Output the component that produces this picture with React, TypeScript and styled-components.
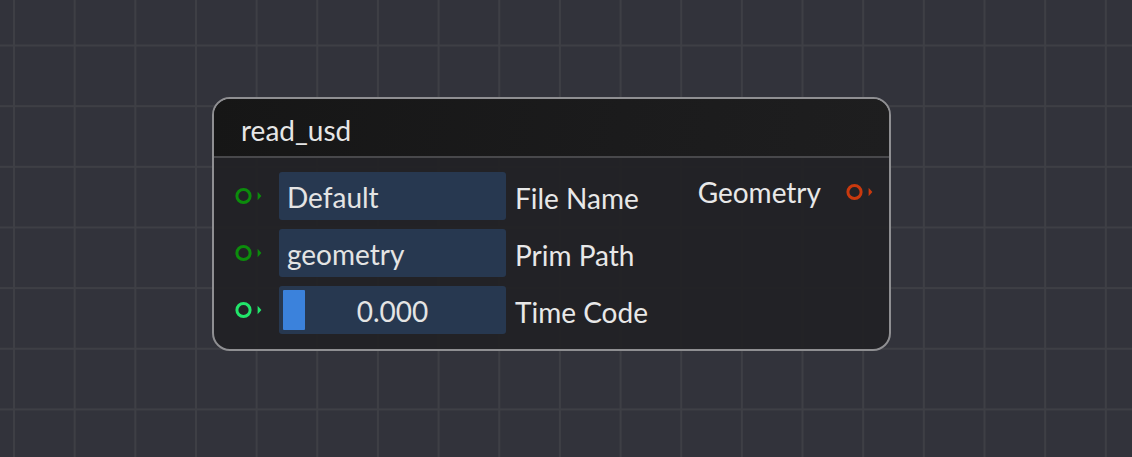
import styled, { createGlobalStyle } from 'styled-components';

const GlobalStyle = createGlobalStyle`
    html, body {
        margin: 0;
        padding: 0;
        width: 100%;
        height: 100%;
        overflow: hidden;
    }
    body {
        font-family: Lato, 'Noto Sans', sans-serif;
        background-color: #32333b;
    }
`;

const Canvas = styled.div`
    position: relative;
    width: 1132px;
    height: 457px;
    background-color: #32333b;
    background-image: linear-gradient(to right, #3e3f45 2px, transparent 2px),
        linear-gradient(to bottom, #3e3f45 2px, transparent 2px);
    background-size: 60.67px 60.67px;
    background-position: 13px 44.5px;
`;

const Node = styled.div<{ $x: number; $y: number }>`
    position: absolute;
    left: ${({ $x }) => $x}px;
    top: ${({ $y }) => $y}px;
    width: 679px;
    box-sizing: border-box;
    border: 2px solid #8f8f92;
    border-radius: 18px;
    overflow: hidden;
    background: rgba(34, 34, 37, 0.95);
    color: #e6e6e6;
`;

const Header = styled.div`
    display: flex;
    align-items: center;
    box-sizing: border-box;
    height: 59px;
    padding: 5px 0 0 27px;
    background: linear-gradient(100deg, #161616 0%, #1b1b1c 60%, #1e1e1f 100%);
    border-bottom: 2px solid #48484b;
    font-size: 28px;
`;

const Body = styled.div`
    display: flex;
    justify-content: space-between;
    padding: 14px 16px 15px 20px;
`;

const Inputs = styled.div`
    display: flex;
    flex-direction: column;
    gap: 9px;
`;

const Row = styled.div`
    display: flex;
    align-items: center;
    height: 48px;
`;

const PinSlot = styled.div`
    width: 45px;
    display: flex;
    align-items: center;
`;

const Field = styled.div<{ $centered?: boolean }>`
    position: relative;
    display: flex;
    align-items: center;
    justify-content: ${({ $centered }) => ($centered ? 'center' : 'flex-start')};
    box-sizing: border-box;
    width: 227px;
    height: 48px;
    padding: 2px 8px 0;
    border-radius: 3px;
    background: #273850;
    font-size: 28px;
    color: #e4e4e4;
`;

const SliderFill = styled.div`
    position: absolute;
    left: 4px;
    top: 4px;
    bottom: 4px;
    width: 22px;
    background: #3b82dc;
    border-radius: 1px;
`;

const Label = styled.span`
    margin-left: 9px;
    padding-top: 3px;
    font-size: 28px;
    color: #e8e8e8;
`;

const Outputs = styled.div`
    display: flex;
    flex-direction: column;
`;

const OutputRow = styled.div`
    display: flex;
    align-items: center;
    height: 40px;
    gap: 24px;
`;

const OutputLabel = styled.span`
    font-size: 28px;
    color: #e8e8e8;
`;

const PinIcon = ({ color }: { color: string }) => (
    <svg width="28" height="20" viewBox="0 0 28 20">
        <circle cx="9.5" cy="10" r="6.6" fill="none" stroke={color} strokeWidth="3" />
        <path d="M23.6 5.8 L27.4 10 L23.6 14.2 Z" fill={color} />
    </svg>
);

type Input = {
    name: string;
    value: string;
    pin: string;
    slider?: boolean;
};

const inputs: Input[] = [
    { name: 'File Name', value: 'Default', pin: '#0c8c0c' },
    { name: 'Prim Path', value: 'geometry', pin: '#0c8c0c' },
    { name: 'Time Code', value: '0.000', pin: '#22e56a', slider: true },
];

export default function App() {
    return (
        <>
            <GlobalStyle />
            <Canvas>
                <Node $x={212} $y={97}>
                    <Header>read_usd</Header>
                    <Body>
                        <Inputs>
                            {inputs.map(input => (
                                <Row key={input.name}>
                                    <PinSlot>
                                        <PinIcon color={input.pin} />
                                    </PinSlot>
                                    <Field $centered={input.slider}>
                                        {input.slider && <SliderFill />}
                                        {input.value}
                                    </Field>
                                    <Label>{input.name}</Label>
                                </Row>
                            ))}
                        </Inputs>
                        <Outputs>
                            <OutputRow>
                                <OutputLabel>Geometry</OutputLabel>
                                <PinIcon color="#c9390e" />
                            </OutputRow>
                        </Outputs>
                    </Body>
                </Node>
            </Canvas>
        </>
    );
}
